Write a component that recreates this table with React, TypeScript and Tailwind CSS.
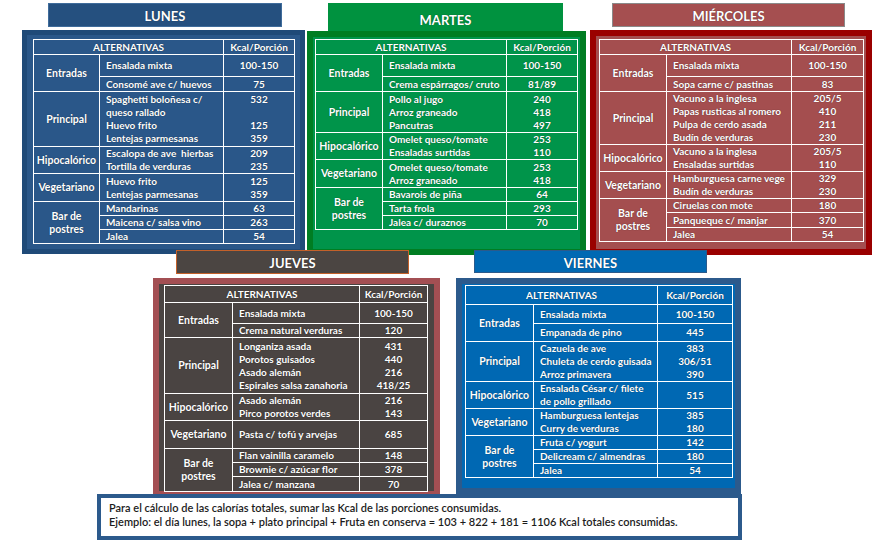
import React from "react";

interface Item {
  names: string[];
  kcals: string[];
  h: string;
}

interface Group {
  label: string[];
  items: Item[];
}

interface Day {
  title: string;
  col: string;
  titleBox: string;
  titleText: string;
  panel: string;
  table: string;
  cols: [string, string, string];
  headerH: string;
  groups: Group[];
}

const it = (names: string[], kcals: string[], h: string): Item => ({ names, kcals, h });

const LUNES: Day = {
  title: "LUNES",
  col: "ml-[22px] w-[283px]",
  titleBox: "ml-[26px] w-[234px] h-[24px] bg-[#25507f] border border-[#3f6c9b]",
  titleText: "pt-[5px]",
  panel: "mt-[3px] h-[224px] border-[5px] border-[#1f4a78] bg-[#2a5789] pl-[6px] pt-[4px]",
  table: "w-[261px]",
  cols: ["w-[66px]", "w-[124px]", "w-[71px]"],
  headerH: "h-[15px]",
  groups: [
    {
      label: ["Entradas"],
      items: [it(["Ensalada mixta"], ["100-150"], "h-[22px]"), it(["Consomé ave c/ huevos"], ["75"], "h-[15px]")],
    },
    {
      label: ["Principal"],
      items: [
        it(
          ["Spaghetti boloñesa c/", "queso rallado", "Huevo frito", "Lentejas parmesanas"],
          ["532", "", "125", "359"],
          "h-[55px]"
        ),
      ],
    },
    {
      label: ["Hipocalórico"],
      items: [it(["Escalopa de ave  hierbas", "Tortilla de verduras"], ["209", "235"], "h-[26px]")],
    },
    {
      label: ["Vegetariano"],
      items: [it(["Huevo frito", "Lentejas parmesanas"], ["125", "359"], "h-[28px]")],
    },
    {
      label: ["Bar de", "postres"],
      items: [
        it(["Mandarinas"], ["63"], "h-[14px]"),
        it(["Maicena c/ salsa vino"], ["263"], "h-[14px]"),
        it(["Jalea"], ["54"], "h-[14px]"),
      ],
    },
  ],
};

const MARTES: Day = {
  title: "MARTES",
  col: "ml-[2px] w-[279px]",
  titleBox: "ml-[21px] w-[235px] h-[28px] bg-[#00923f]",
  titleText: "pt-[10px] h-[22px] overflow-hidden",
  panel: "h-[224px] border-[6px] border-[#007d22] bg-[#00944a] pl-[2px] pt-[2px]",
  table: "w-[262px]",
  cols: ["w-[67px]", "w-[124px]", "w-[71px]"],
  headerH: "h-[15px]",
  groups: [
    {
      label: ["Entradas"],
      items: [it(["Ensalada mixta"], ["100-150"], "h-[22px]"), it(["Crema espárragos/ cruto"], ["81/89"], "h-[15px]")],
    },
    {
      label: ["Principal"],
      items: [it(["Pollo al jugo", "Arroz graneado", "Pancutras"], ["240", "418", "497"], "h-[41px]")],
    },
    {
      label: ["Hipocalórico"],
      items: [it(["Omelet queso/tomate", "Ensaladas surtidas"], ["253", "110"], "h-[26px]")],
    },
    {
      label: ["Vegetariano"],
      items: [it(["Omelet queso/tomate", "Arroz graneado"], ["253", "418"], "h-[28px]")],
    },
    {
      label: ["Bar de", "postres"],
      items: [
        it(["Bavarois de piña"], ["64"], "h-[14px]"),
        it(["Tarta frola"], ["293"], "h-[14px]"),
        it(["Jalea c/ duraznos"], ["70"], "h-[14px]"),
      ],
    },
  ],
};

const MIERCOLES: Day = {
  title: "MIÉRCOLES",
  col: "ml-[4px] w-[282px]",
  titleBox: "ml-[22px] w-[233px] h-[24px] bg-[#a54f50] border border-[#8a8a8a]",
  titleText: "pt-[5px]",
  panel: "mt-[3px] h-[225px] border-[6px] border-[#9a0000] bg-[#a44e4f] pl-[3px] pt-[3px]",
  table: "w-[264px]",
  cols: ["w-[67px]", "w-[125px]", "w-[72px]"],
  headerH: "h-[15px]",
  groups: [
    {
      label: ["Entradas"],
      items: [it(["Ensalada mixta"], ["100-150"], "h-[22px]"), it(["Sopa carne c/ pastinas"], ["83"], "h-[15px]")],
    },
    {
      label: ["Principal"],
      items: [
        it(
          ["Vacuno a la inglesa", "Papas rusticas al romero", "Pulpa de cerdo asada", "Budín de verduras"],
          ["205/5", "410", "211", "230"],
          "h-[53px]"
        ),
      ],
    },
    {
      label: ["Hipocalórico"],
      items: [it(["Vacuno a la inglesa", "Ensaladas surtidas"], ["205/5", "110"], "h-[27px]")],
    },
    {
      label: ["Vegetariano"],
      items: [it(["Hamburguesa carne vege", "Budín de verduras"], ["329", "230"], "h-[27px]")],
    },
    {
      label: ["Bar de", "postres"],
      items: [
        it(["Ciruelas con mote"], ["180"], "h-[14px]"),
        it(["Panqueque c/ manjar"], ["370"], "h-[15px]"),
        it(["Jalea"], ["54"], "h-[13px]"),
      ],
    },
  ],
};

const JUEVES: Day = {
  title: "JUEVES",
  col: "ml-[153px] w-[287px]",
  titleBox: "ml-[23px] w-[233px] h-[24px] bg-[#4b4542] border border-[#c4612a]",
  titleText: "pt-[5px]",
  panel: "mt-[4px] h-[219px] border-[6px] border-[#a34f53] bg-[#4a4442] pl-[5px] pt-[1px]",
  table: "w-[263px]",
  cols: ["w-[68px]", "w-[127px]", "w-[68px]"],
  headerH: "h-[17px]",
  groups: [
    {
      label: ["Entradas"],
      items: [it(["Ensalada mixta"], ["100-150"], "h-[21px]"), it(["Crema natural verduras"], ["120"], "h-[14px]")],
    },
    {
      label: ["Principal"],
      items: [
        it(
          ["Longaniza asada", "Porotos guisados", "Asado alemán", "Espirales salsa zanahoria"],
          ["431", "440", "216", "418/25"],
          "h-[56px]"
        ),
      ],
    },
    {
      label: ["Hipocalórico"],
      items: [it(["Asado alemán", "Pirco porotos verdes"], ["216", "143"], "h-[25px]")],
    },
    {
      label: ["Vegetariano"],
      items: [it(["Pasta c/ tofú y arvejas"], ["685"], "h-[28px]")],
    },
    {
      label: ["Bar de", "postres"],
      items: [
        it(["Flan vainilla caramelo"], ["148"], "h-[13px]"),
        it(["Brownie c/ azúcar flor"], ["378"], "h-[14px]"),
        it(["Jalea c/ manzana"], ["70"], "h-[15px]"),
      ],
    },
  ],
};

const VIERNES: Day = {
  title: "VIERNES",
  col: "ml-[16px] w-[285px]",
  titleBox: "ml-[18px] w-[233px] h-[23px] bg-[#0069b3] border border-[#2b5a8b]",
  titleText: "pt-[5px]",
  panel: "mt-[5px] h-[216px] border-[6px] border-[#2c5a8c] bg-[#0068b3] pl-[3px] pt-[1px]",
  table: "w-[267px]",
  cols: ["w-[68px]", "w-[124px]", "w-[75px]"],
  headerH: "h-[19px]",
  groups: [
    {
      label: ["Entradas"],
      items: [it(["Ensalada mixta"], ["100-150"], "h-[19px]"), it(["Empanada de pino"], ["445"], "h-[18px]")],
    },
    {
      label: ["Principal"],
      items: [
        it(["Cazuela de ave", "Chuleta de cerdo guisada", "Arroz primavera"], ["383", "306/51", "390"], "h-[39px]"),
      ],
    },
    {
      label: ["Hipocalórico"],
      items: [it(["Ensalada César c/ filete", "de pollo grillado"], ["515"], "h-[26px]")],
    },
    {
      label: ["Vegetariano"],
      items: [it(["Hamburguesa lentejas", "Curry de verduras"], ["385", "180"], "h-[27px]")],
    },
    {
      label: ["Bar de", "postres"],
      items: [
        it(["Fruta c/ yogurt"], ["142"], "h-[13px]"),
        it(["Delicream c/ almendras"], ["180"], "h-[14px]"),
        it(["Jalea"], ["54"], "h-[14px]"),
      ],
    },
  ],
};

const cell = "border border-white p-0 align-middle";

const MenuTable = ({ day }: { day: Day }) => (
  <table className={`table-fixed border-collapse ${day.table}`}>
    <colgroup>
      <col className={day.cols[0]} />
      <col className={day.cols[1]} />
      <col className={day.cols[2]} />
    </colgroup>
    <thead>
      <tr className={day.headerH}>
        <th colSpan={2} className={`${cell} text-center font-bold leading-[12px]`}>
          ALTERNATIVAS
        </th>
        <th className={`${cell} text-center font-bold leading-[12px]`}>Kcal/Porción</th>
      </tr>
    </thead>
    <tbody>
      {day.groups.map((g) =>
        g.items.map((item, i) => (
          <tr key={g.label.join() + i} className={item.h}>
            {i === 0 && (
              <td rowSpan={g.items.length} className={`${cell} text-center text-[10.5px] leading-[13px]`}>
                {g.label.map((l) => (
                  <div key={l}>{l}</div>
                ))}
              </td>
            )}
            <td className={`${cell} pl-[6px] leading-[13px] whitespace-pre`}>
              {item.names.map((n) => (
                <div key={n}>{n}</div>
              ))}
            </td>
            <td className={`${cell} text-center leading-[13px]`}>
              {item.kcals.map((k, j) => (
                <div key={j}>{k || "\u00a0"}</div>
              ))}
            </td>
          </tr>
        ))
      )}
    </tbody>
  </table>
);

const DayColumn = ({ day }: { day: Day }) => (
  <div className={`flex flex-col ${day.col}`}>
    <div className={day.titleBox}>
      <div className={`text-center text-[13px] leading-[14px] font-bold ${day.titleText}`}>{day.title}</div>
    </div>
    <div className={day.panel}>
      <MenuTable day={day} />
    </div>
  </div>
);

export default function App() {
  return (
    <div className="w-[886px] h-[551px] overflow-hidden bg-white font-['Lato','Noto_Sans',sans-serif] text-[10px] font-bold text-white [text-shadow:0_0_1px_rgba(0,0,0,0.55)]">
      <div className="flex items-start pt-[3px]">
        <DayColumn day={LUNES} />
        <DayColumn day={MARTES} />
        <DayColumn day={MIERCOLES} />
      </div>
      <div className="relative flex items-start -mt-[5px]">
        <DayColumn day={JUEVES} />
        <DayColumn day={VIERNES} />
      </div>
      <div className="relative z-10 -mt-[3px] ml-[97px] w-[645px] h-[46px] border-[4px] border-[#2c5a8c] bg-white pl-[8px] pt-[3px] text-[11px] leading-[14px] font-semibold text-[#1c1c1c] [text-shadow:none]">
        <div>Para el cálculo de las calorías totales, sumar las Kcal de las porciones consumidas.</div>
        <div>
          Ejemplo: el día lunes, la sopa + plato principal + Fruta en conserva = 103 + 822 + 181 = 1106 Kcal totales
          consumidas.
        </div>
      </div>
    </div>
  );
}
